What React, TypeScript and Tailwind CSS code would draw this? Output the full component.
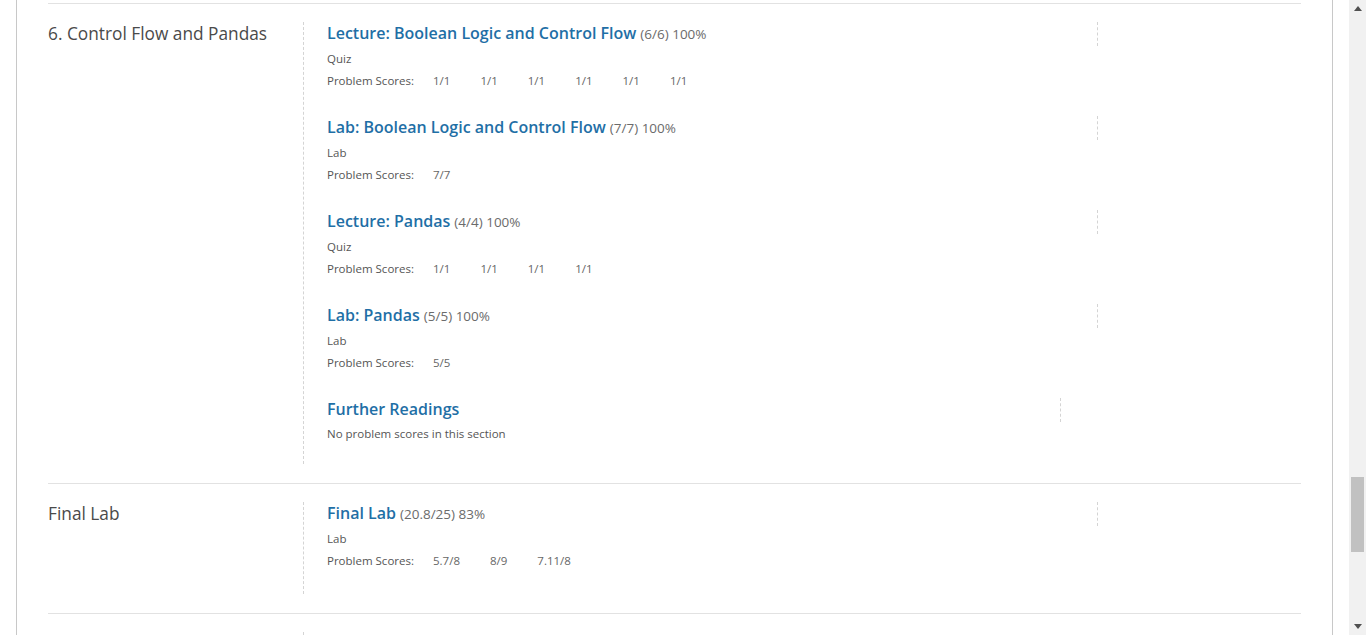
import React from 'react';

type Sub = {
  title: string;
  score?: string;
  kind?: string;
  scores?: string[];
  side?: number;
};

const controlFlow: Sub[] = [
  { title: 'Lecture: Boolean Logic and Control Flow', score: '(6/6) 100%', kind: 'Quiz', scores: ['1/1', '1/1', '1/1', '1/1', '1/1', '1/1'] },
  { title: 'Lab: Boolean Logic and Control Flow', score: '(7/7) 100%', kind: 'Lab', scores: ['7/7'] },
  { title: 'Lecture: Pandas', score: '(4/4) 100%', kind: 'Quiz', scores: ['1/1', '1/1', '1/1', '1/1'] },
  { title: 'Lab: Pandas', score: '(5/5) 100%', kind: 'Lab', scores: ['5/5'] },
];

const Subsection: React.FC<{ sub: Sub; last?: boolean }> = ({ sub, last }) => (
  <div className={last ? '' : 'mb-[26px]'}>
    <div className="flex justify-between items-start h-[22px]">
      <h3 className="leading-[22px] whitespace-nowrap">
        <a className="text-[16px] font-semibold text-[#1f6fa6]">{sub.title}</a>
        {sub.score && <span className="text-[13.5px] text-[#6b6b6b] ml-[4px]">{sub.score}</span>}
      </h3>
      <div className={`${sub.side ? 'w-[241px]' : 'w-[204px]'} h-[24px] border-l border-dashed border-[#d4d4d4]`}></div>
    </div>
    {sub.scores ? (
      <>
        <div className="mt-[6px] text-[11.5px] leading-[18px] text-[#555]">{sub.kind}</div>
        <div className="mt-[4px] flex text-[11.5px] leading-[18px] text-[#555]">
          <span className="w-[106px]">Problem Scores:</span>
          {sub.scores.map((s, i) => (
            <span key={i} className="mr-[30px] text-[#666]">{s}</span>
          ))}
        </div>
      </>
    ) : (
      <div className="mt-[5px] text-[11.5px] leading-[18px] text-[#555]">No problem scores in this section</div>
    )}
  </div>
);

const Section: React.FC<{ label: string; children: React.ReactNode; pb?: string }> = ({ label, children, pb }) => (
  <section className="flex border-t border-[#e2e2e2] pt-[18px] pb-[19px]">
    <h2 className="w-[255px] shrink-0 text-[17.3px] leading-[24px] text-[#4a4a4a]">{label}</h2>
    <div className={`flex-1 border-l border-dashed border-[#d4d4d4] pl-[23px] ${pb ?? 'pb-[21px]'}`}>{children}</div>
  </section>
);

export default function App() {
  return (
    <div className="flex h-[635px] overflow-hidden bg-white" style={{ fontFamily: '"Open Sans", "Liberation Sans", sans-serif' }}>
      <div className="flex-1 pl-[16px] pr-[16px]">
        <div className="h-full border-l border-r border-[#c8c8c8] px-[31px] pt-[3px]">
          <Section label="6. Control Flow and Pandas">
            {controlFlow.map((s, i) => (
              <Subsection key={i} sub={s} />
            ))}
            <Subsection sub={{ title: 'Further Readings', side: 241 }} last />
          </Section>
          <Section label="Final Lab" pb="pb-[24px]">
            <Subsection sub={{ title: 'Final Lab', score: '(20.8/25) 83%', kind: 'Lab', scores: ['5.7/8', '8/9', '7.11/8'] }} last />
          </Section>
          <section className="flex border-t border-[#e2e2e2] pt-[18px]">
            <div className="w-[255px] shrink-0"></div>
            <div className="flex-1 border-l border-dashed border-[#d4d4d4] h-[40px]"></div>
          </section>
        </div>
      </div>
      {/* scrollbar */}
      <div className="w-[17px] shrink-0 bg-[#f1f1f1] flex flex-col items-center">
        <div className="h-[17px] w-full flex items-center justify-center">
          <svg width="8" height="5" viewBox="0 0 8 5"><path d="M0 5 L4 0 L8 5 Z" fill="#505050" /></svg>
        </div>
        <div className="flex-1 w-full relative">
          <div className="absolute left-[2px] right-[2px] top-[460px] h-[75px] bg-[#c1c1c1]"></div>
        </div>
        <div className="h-[17px] w-full flex items-center justify-center">
          <svg width="8" height="5" viewBox="0 0 8 5"><path d="M0 0 L4 5 L8 0 Z" fill="#505050" /></svg>
        </div>
      </div>
    </div>
  );
}
